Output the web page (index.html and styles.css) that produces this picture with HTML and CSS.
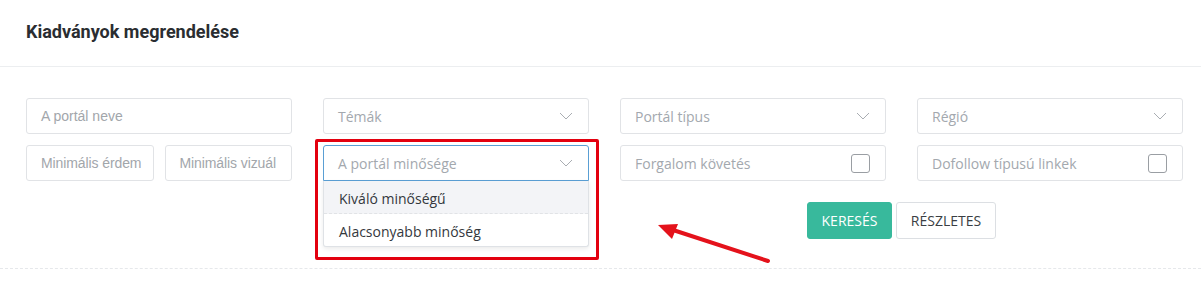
FILE: index.html
```html
<!DOCTYPE html>
<html lang="hu">
<head>
<meta charset="utf-8">
<link rel="stylesheet" href="styles.css">
</head>
<body>
<div class="page">
  <header class="head"><h1 class="title">Kiadványok megrendelése</h1></header>
  <section class="filters">
    <div class="grid">
      <div class="cell"><div class="input text"><span class="ph">A portál neve</span></div></div>
      <div class="cell"><div class="input select"><span>Témák</span><svg class="chev" viewBox="0 0 14 8"><path d="M1 1l6 6 6-6"/></svg></div></div>
      <div class="cell"><div class="input select"><span>Portál típus</span><svg class="chev" viewBox="0 0 14 8"><path d="M1 1l6 6 6-6"/></svg></div></div>
      <div class="cell"><div class="input select"><span>Régió</span><svg class="chev" viewBox="0 0 14 8"><path d="M1 1l6 6 6-6"/></svg></div></div>

      <div class="cell pair">
        <div class="input text"><span class="ph">Minimális érdem</span></div>
        <div class="input text"><span class="ph">Minimális vizuál</span></div>
      </div>
      <div class="cell dd">
        <div class="input select open"><span>A portál minősége</span><svg class="chev" viewBox="0 0 14 8"><path d="M1 1l6 6 6-6"/></svg></div>
        <ul class="menu">
          <li class="opt hl">Kiváló minőségű</li>
          <li class="opt">Alacsonyabb minőség</li>
        </ul>
        <div class="mark"></div>
      </div>
      <div class="cell"><div class="input select"><span>Forgalom követés</span><i class="check"></i></div></div>
      <div class="cell"><div class="input select"><span>Dofollow típusú linkek</span><i class="check"></i></div></div>
    </div>
    <div class="actions">
      <div></div>
      <div class="btns">
        <button class="btn primary">KERESÉS</button>
        <button class="btn">RÉSZLETES</button>
      </div>
    </div>
    <svg class="arrow" viewBox="0 0 120 44" width="120" height="44"><line x1="112" y1="39" x2="14" y2="7" /><polygon points="2,3 22,2 16,17"/></svg>
  </section>
  <div class="rule"></div>
</div>
</body>
</html>
```
FILE: styles.css
```css
* { box-sizing: border-box; }
html, body { margin: 0; background: #fff; }
.page { width: 1201px; position: relative; }
.head { height: 67px; border-bottom: 1px solid #eceef0; padding: 0 26px; display: flex; align-items: center; }
.title { margin: 0 0 2px; font: 700 18px/1 Roboto, "Liberation Sans", sans-serif; color: #2a2d31; }
.filters { padding: 31px 18px 0 26px; position: relative; }
.grid { display: grid; grid-template-columns: repeat(4, 266px); column-gap: 31px; row-gap: 11px; }
.cell { position: relative; }
.pair { display: flex; gap: 11px; }
.pair .input { flex: 1; min-width: 0; padding: 0 8px 0 14px; }
.input { height: 36px; border: 1px solid #e1e3e6; border-radius: 3px; background: #fff; display: flex; align-items: center; justify-content: space-between; padding: 0 14px; }
.ph { display: block; white-space: nowrap; }
.text { font: 14px "Liberation Sans", Arial, sans-serif; color: #a2a6ab; }
.pair .text { letter-spacing: -0.1px; }
.select { font: 14px "Open Sans", sans-serif; color: #a3a8ae; }
.select.open { border-color: #5a9fd4; border-radius: 3px 3px 0 0; }
.chev { width: 14px; height: 8px; fill: none; stroke: #a9adb2; stroke-width: 1; margin-right: 1px; }
.check { width: 19px; height: 19px; border: 1px solid #9a9ea3; border-radius: 3px; margin-right: 1px; }
.menu { position: absolute; left: 0; right: 0; top: 36px; margin: 0; padding: 0; list-style: none; background: #fff; border: 1px solid #dfe2e6; border-top: 0; border-radius: 0 0 3px 3px; box-shadow: 0 2px 4px rgba(0,0,0,.08); z-index: 2; }
.opt { height: 32px; display: flex; align-items: center; padding: 2px 15px 0; font: 14px "Open Sans", sans-serif; color: #34383d; }
.opt.hl { height: 33px; background: #f3f4f7; border-bottom: 1px dashed #e1e3e6; }
.mark { position: absolute; left: -8px; top: -6px; width: 284px; height: 121px; border: 3px solid #e3000f; border-radius: 2px; z-index: 3; }
.actions { display: grid; grid-template-columns: 563px 563px; column-gap: 31px; margin-top: 21px; }
.btns { display: flex; justify-content: center; gap: 4px; }
.btn { height: 37px; padding: 0; border: 1px solid #dcdfe3; border-radius: 3px; background: #fff; font: 14px "Open Sans", sans-serif; color: #3a3e43; width: 100px; }
.btn.primary { background: #38b99c; border-color: #38b99c; color: #fff; width: 85px; }
.arrow { position: absolute; left: 656px; top: 155px; overflow: visible; }
.arrow line { stroke: #e4121b; stroke-width: 4; stroke-linecap: round; }
.arrow polygon { fill: #e4121b; }
.rule { margin-top: 29px; border-top: 1px dashed #e6e8eb; }
```
